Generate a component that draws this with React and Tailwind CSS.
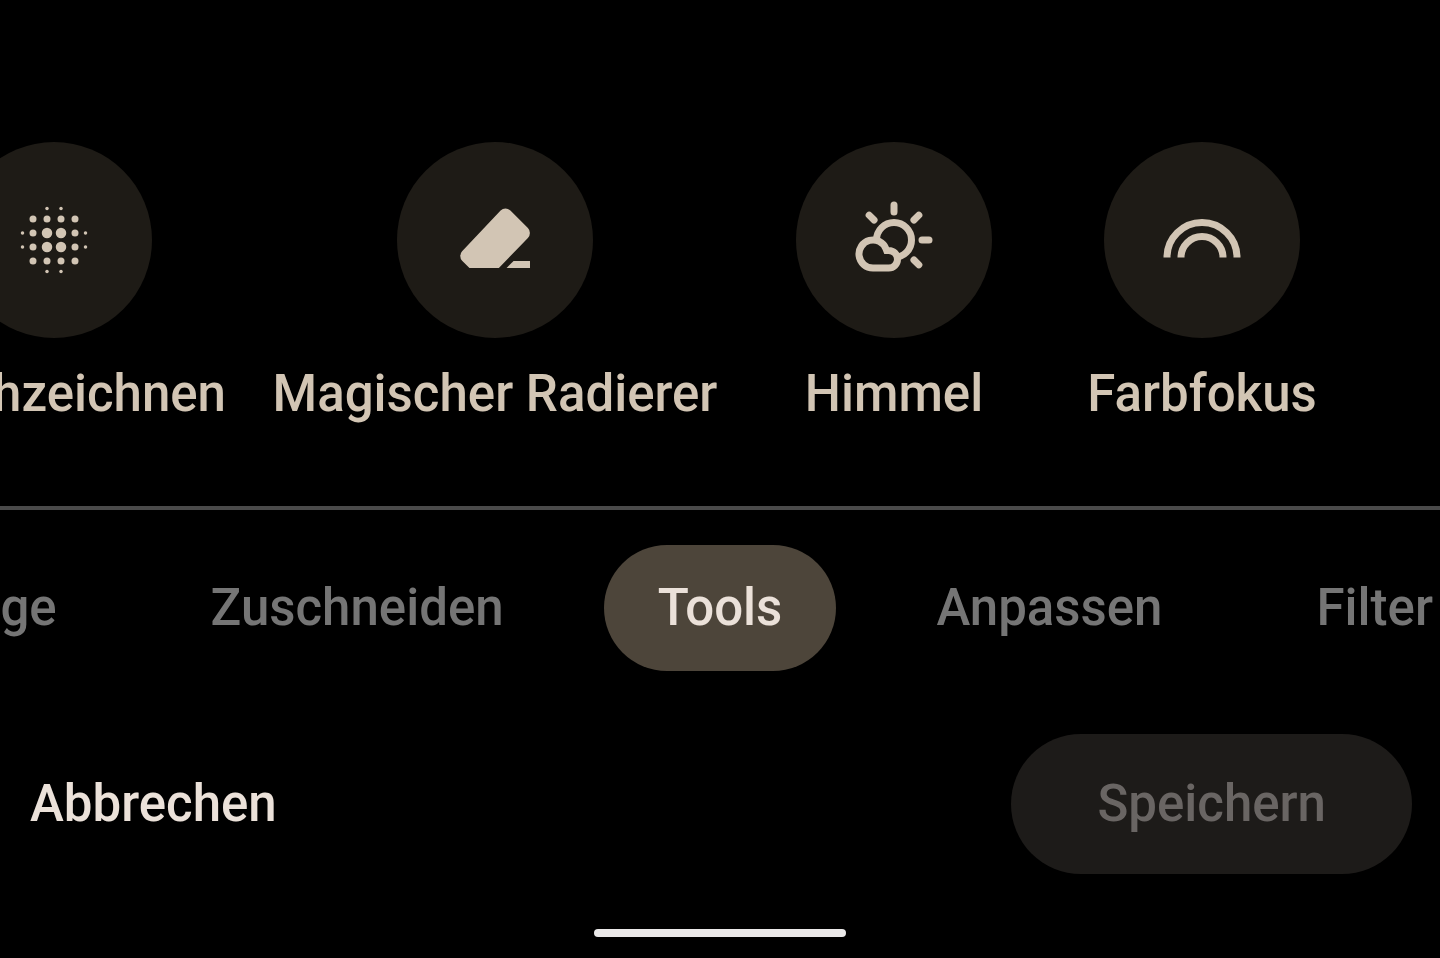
import { useState } from "react"

const BlurIcon = () => {
  const inner = [10, 14]
  const grid = [6, 10, 14, 18]

  return (
    <svg viewBox="0 0 24 24" className="size-21" fill="currentColor" aria-hidden="true">
      {grid.map((x) =>
        grid.map((y) => (
          <circle key={`${x}-${y}`} cx={x} cy={y} r={inner.includes(x) && inner.includes(y) ? 1.5 : 1} />
        )),
      )}
      {inner.map((n) => (
        <g key={n}>
          <circle cx={n} cy="3" r=".5" />
          <circle cx={n} cy="21" r=".5" />
          <circle cx="3" cy={n} r=".5" />
          <circle cx="21" cy={n} r=".5" />
        </g>
      ))}
    </svg>
  )
}

const EraserIcon = () => (
  <svg viewBox="0 0 24 24" className="size-21" fill="currentColor" aria-hidden="true">
    <path d="M13.1 20H4.7l-2.1-2.1a2 2 0 0 1 0-2.7L13.6 3.6a2 2 0 0 1 2.8 0l5 5a2 2 0 0 1 0 2.8z" />
    <path d="M17.3 18H22v2h-6.7z" />
  </svg>
)

const SkyIcon = () => (
  <svg
    viewBox="0 0 24 24"
    className="size-21"
    fill="none"
    stroke="currentColor"
    strokeWidth="2"
    strokeLinecap="round"
    aria-hidden="true"
  >
    <circle cx="12" cy="12" r="5" />
    <path d="M12 2v2M20 12h2M17.7 6.3l1.4-1.4M6.3 6.3L4.9 4.9M17.7 17.7l1.4 1.4" />
    <path d="M6 20a4 4 0 1 1 3.7-5.5l.2.5h.6a2.5 2.5 0 0 1 0 5z" className="fill-[#1e1b16]" />
  </svg>
)

const ColorFocusIcon = () => (
  <svg viewBox="0 0 24 24" className="size-21" fill="none" stroke="currentColor" strokeWidth="2" aria-hidden="true">
    <path d="M2 17a10 10 0 0 1 20 0M6 17a6 6 0 0 1 12 0" />
  </svg>
)

const TOOLS = [
  { label: "Weichzeichnen", Icon: BlurIcon, width: "w-[346px]" },
  { label: "Magischer Radierer", Icon: EraserIcon, width: "w-[444px]" },
  { label: "Himmel", Icon: SkyIcon, width: "w-[262px]" },
  { label: "Farbfokus", Icon: ColorFocusIcon, width: "w-[262px]" },
]

const TABS_BEFORE = ["Vorschläge", "Zuschneiden"]
const TABS_AFTER = ["Anpassen", "Filter"]

const Tab = ({ label, active, onSelect }) => (
  <button
    role="tab"
    aria-selected={active}
    onClick={() => onSelect(label)}
    className={`shrink-0 rounded-full px-[54px] py-[33px] ${active ? "bg-[#4d453a] text-[#ebe1d9]" : "text-[#757575]"}`}
  >
    {label}
  </button>
)

const App = () => {
  const [tab, setTab] = useState("Tools")

  return (
    <div className="flex min-h-screen flex-col justify-end overflow-hidden bg-black font-['Roboto',sans-serif] text-[51px] leading-[60px] font-medium whitespace-nowrap">
      <main className="flex justify-end gap-[46px] overflow-hidden border-b-4 border-[#4a4a4a] pr-[107px] pb-[82px]">
        {TOOLS.map(({ label, Icon, width }) => (
          <button key={label} className={`flex shrink-0 flex-col items-center gap-[26px] text-[#d2c5b4] ${width}`}>
            <span className="flex size-49 items-center justify-center rounded-full bg-[#1e1b16]">
              <Icon />
            </span>
            <span>{label}</span>
          </button>
        ))}
      </main>

      <div role="tablist" className="grid grid-cols-[minmax(0,1fr)_auto_minmax(0,1fr)] gap-[46px] pt-[35px]">
        <div className="flex justify-end gap-[46px]">
          {TABS_BEFORE.map((label) => (
            <Tab key={label} label={label} active={tab === label} onSelect={setTab} />
          ))}
        </div>
        <Tab label="Tools" active={tab === "Tools"} onSelect={setTab} />
        <div className="flex gap-[46px]">
          {TABS_AFTER.map((label) => (
            <Tab key={label} label={label} active={tab === label} onSelect={setTab} />
          ))}
        </div>
      </div>

      <footer className="flex items-center justify-between pt-[63px] pr-7 pl-[30px]">
        <button className="text-[#ebe1d9]">Abbrechen</button>
        <button disabled className="rounded-full bg-[#1d1b19] px-[86px] py-10 text-[#696563]">
          Speichern
        </button>
      </footer>

      <div className="mx-auto mt-[55px] mb-[21px] h-2 w-63 rounded-full bg-[#ebe9e9]" />
    </div>
  )
}

export default App
